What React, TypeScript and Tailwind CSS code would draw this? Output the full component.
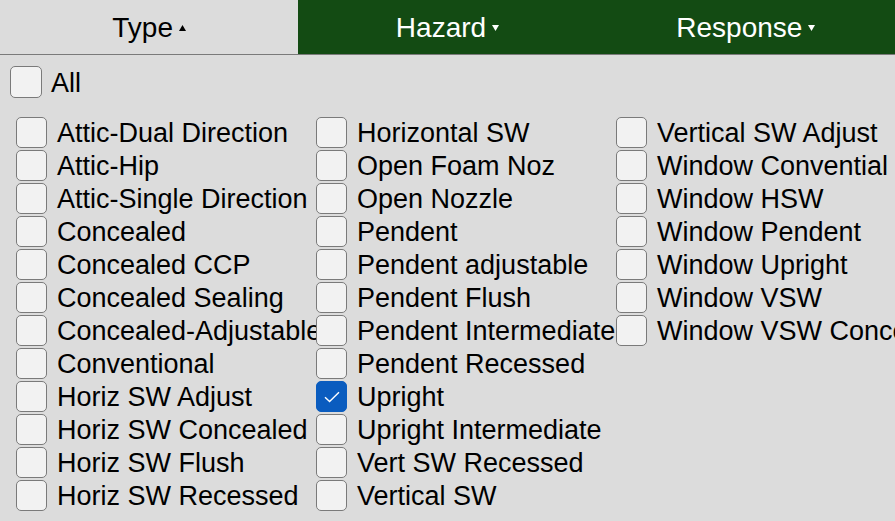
import React, { useState } from 'react';

const TYPES = [
  'Attic-Dual Direction',
  'Attic-Hip',
  'Attic-Single Direction',
  'Concealed',
  'Concealed CCP',
  'Concealed Sealing',
  'Concealed-Adjustable',
  'Conventional',
  'Horiz SW Adjust',
  'Horiz SW Concealed',
  'Horiz SW Flush',
  'Horiz SW Recessed',
  'Horizontal SW',
  'Open Foam Noz',
  'Open Nozzle',
  'Pendent',
  'Pendent adjustable',
  'Pendent Flush',
  'Pendent Intermediate',
  'Pendent Recessed',
  'Upright',
  'Upright Intermediate',
  'Vert SW Recessed',
  'Vertical SW',
  'Vertical SW Adjust',
  'Window Convential',
  'Window HSW',
  'Window Pendent',
  'Window Upright',
  'Window VSW',
  'Window VSW Concealed',
];

const Box: React.FC<{ checked: boolean; big?: boolean }> = ({ checked, big }) => (
  <span
    className={`flex shrink-0 items-center justify-center rounded-[5px] border-[1.5px] ${
      big ? 'h-[32px] w-[32px]' : 'h-[31px] w-[31px]'
    } ${checked ? 'border-[#0a5cbf] bg-[#0a5cbf]' : 'border-[#7a7a7a] bg-[#f2f2f2]'}`}
  >
    {checked && (
      <svg width="16" height="12" viewBox="0 0 16 12" fill="none">
        <path d="M1 6.2 L5.6 10.6 L15 1.2" stroke="white" strokeWidth="1.4" />
      </svg>
    )}
  </span>
);

const Tab: React.FC<{ label: string; active?: boolean; up?: boolean }> = ({ label, active, up }) => (
  <button
    className={`flex flex-1 items-center justify-center gap-[6px] pt-[1px] text-[28px] ${
      active ? 'bg-[#dcdcdc] text-black' : 'bg-[#134b13] text-white'
    }`}
  >
    <span>{label}</span>
    <svg width="7" height="6" viewBox="0 0 7 6" className="mt-[1px]">
      {up ? <path d="M3.5 0 L7 6 L0 6 Z" fill="currentColor" /> : <path d="M0 0 L7 0 L3.5 6 Z" fill="currentColor" />}
    </svg>
  </button>
);

export default function App() {
  const [selected, setSelected] = useState<string[]>(['Upright']);

  const toggle = (t: string) =>
    setSelected((s) => (s.includes(t) ? s.filter((x) => x !== t) : [...s, t]));

  return (
    <div
      className="h-[521px] w-[895px] overflow-hidden bg-[#dcdcdc] text-[27px] text-black"
      style={{ fontFamily: '"Liberation Sans", Arial, sans-serif' }}
    >
      <div className="flex h-[55px] border-b border-[#7a7a7a]">
        <Tab label="Type" active up />
        <Tab label="Hazard" />
        <Tab label="Response" />
      </div>

      <div className="flex items-center gap-[9px] pl-[10px] pt-[11px]">
        <Box checked={selected.length === TYPES.length} big />
        <span className="pt-[2px] leading-none">All</span>
      </div>

      <div className="mt-[18px] grid grid-flow-col grid-cols-[300px_300px_300px] grid-rows-[repeat(12,33px)] pl-[16px]">
        {TYPES.map((t) => (
          <label
            key={t}
            onClick={() => toggle(t)}
            className="flex h-[33px] cursor-pointer items-center gap-[10px] overflow-hidden whitespace-nowrap"
          >
            <Box checked={selected.includes(t)} />
            <span className="pt-[2px] leading-none">{t}</span>
          </label>
        ))}
      </div>
    </div>
  );
}
